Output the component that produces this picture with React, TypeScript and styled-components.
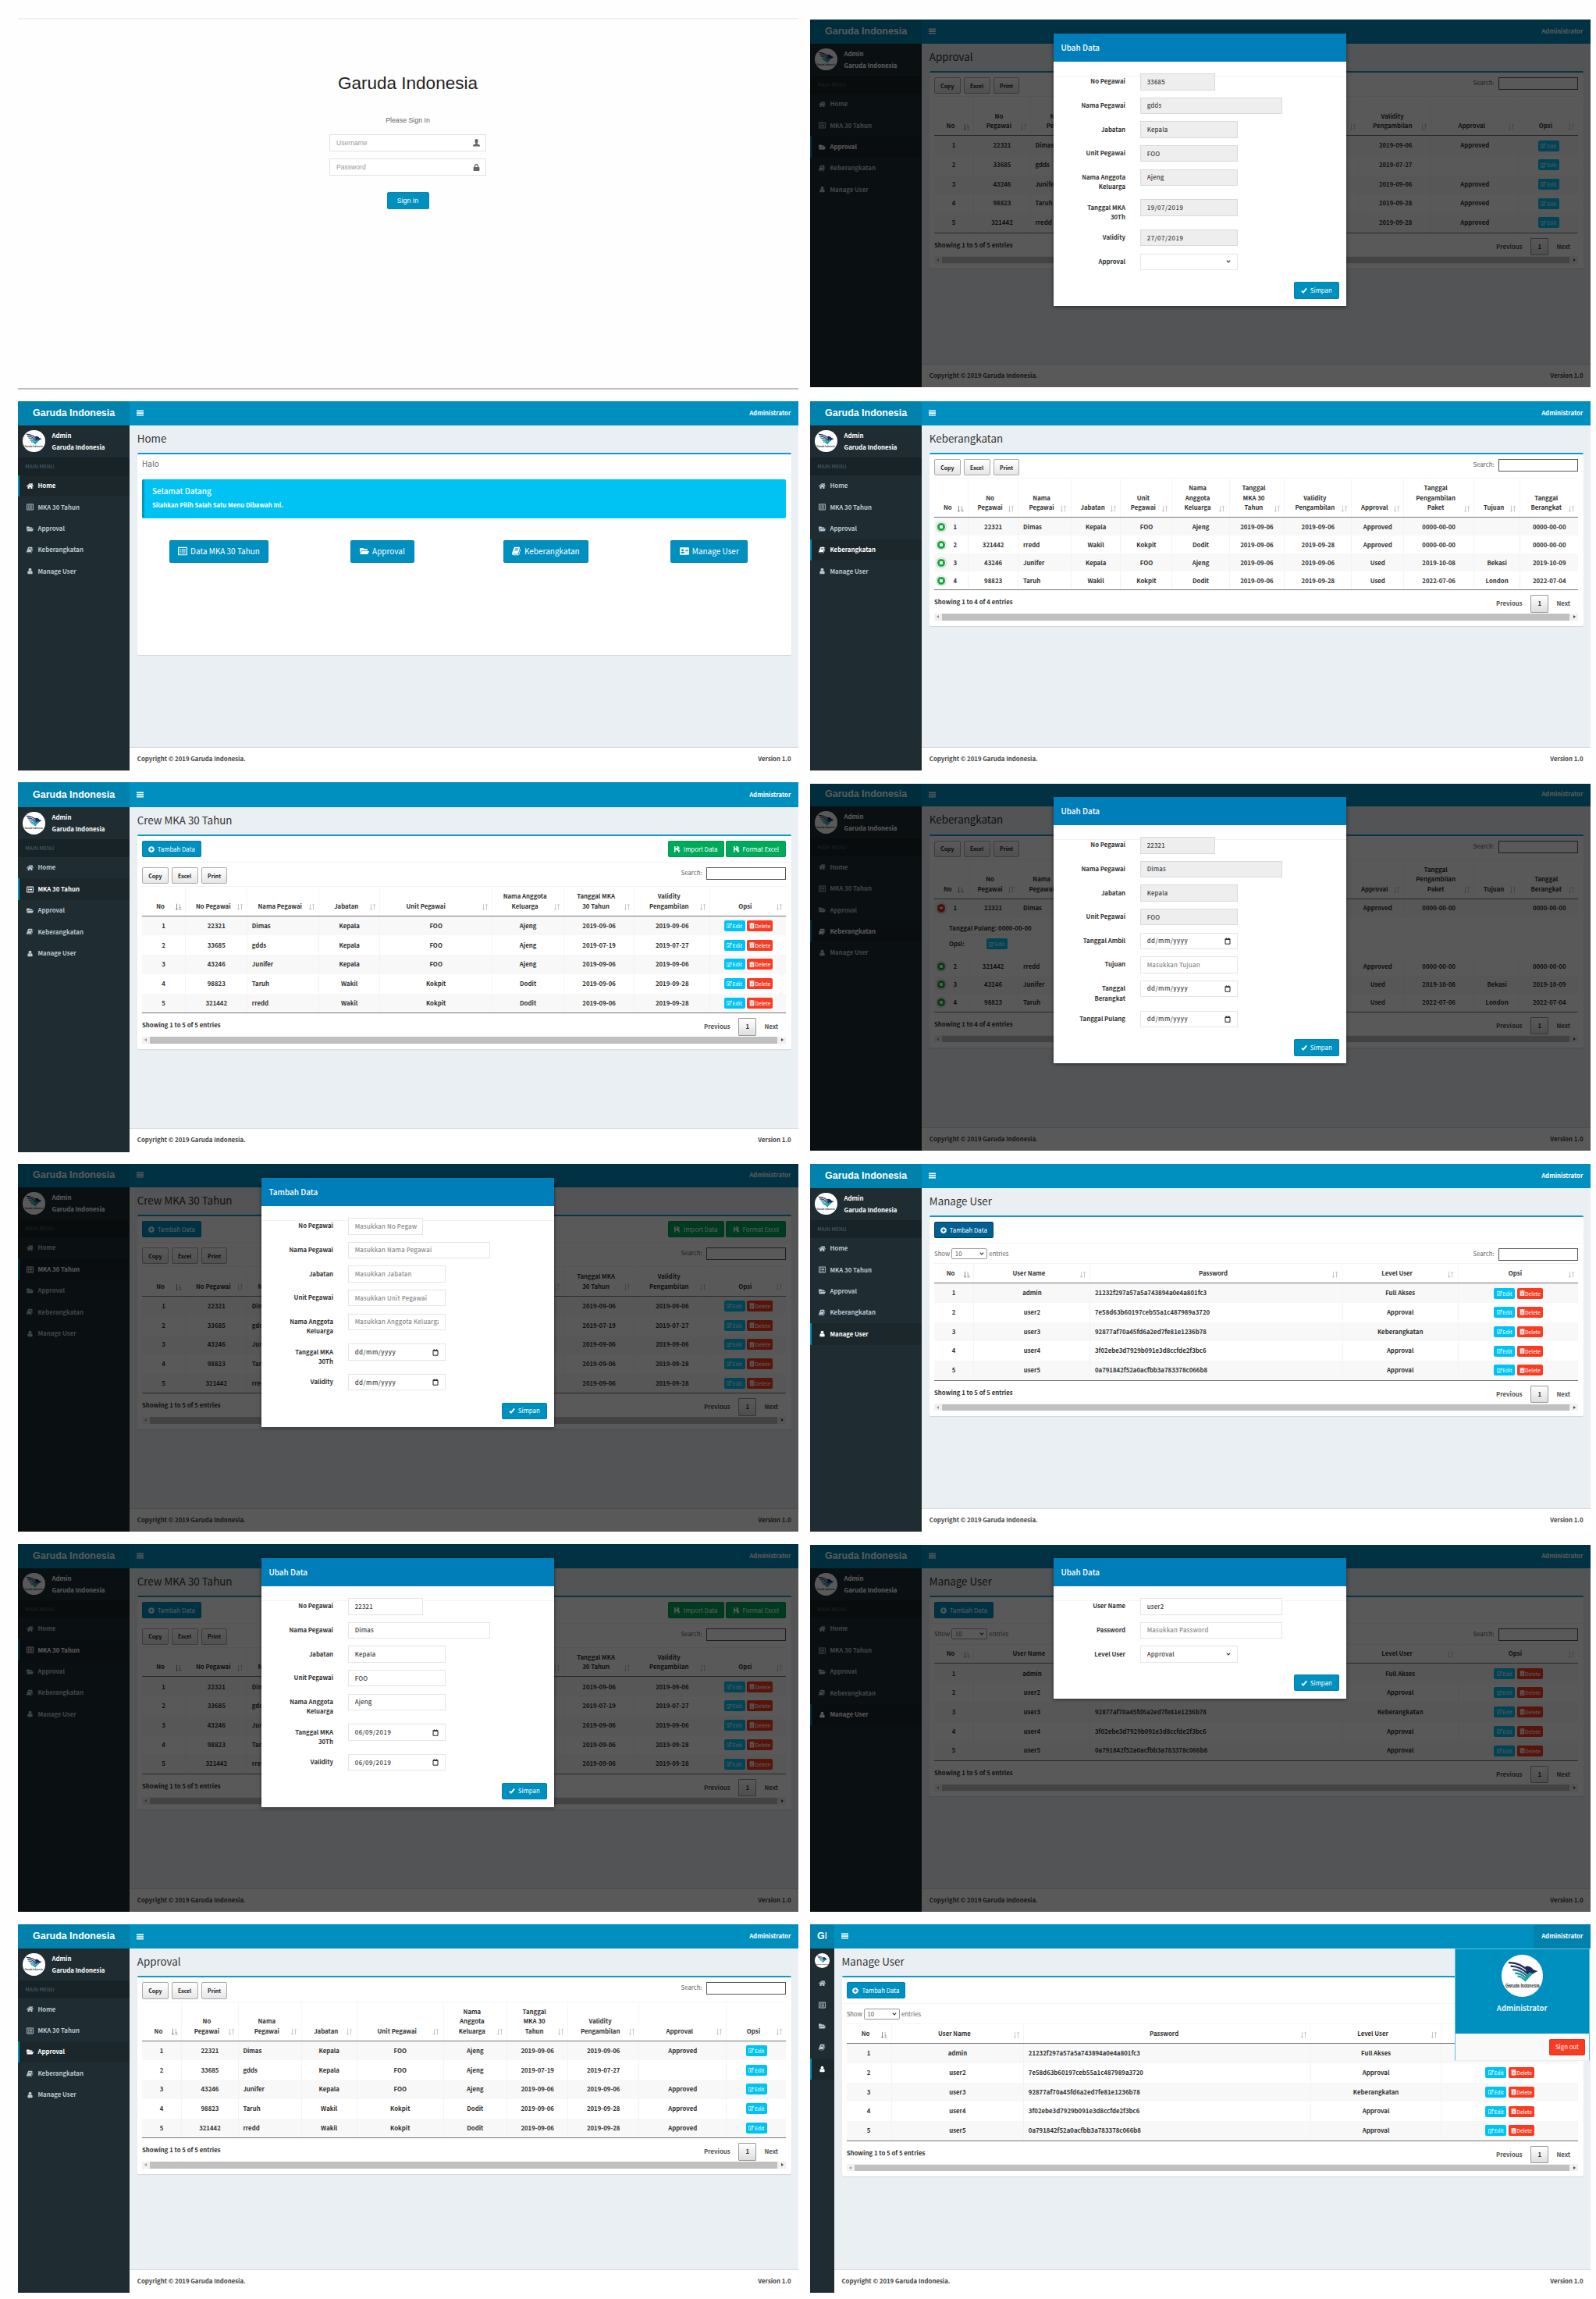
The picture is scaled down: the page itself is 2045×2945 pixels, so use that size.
import React from "react";
import styled, { createGlobalStyle, css } from "styled-components";
import {
  FaAddressCard,
  FaFolderOpen,
  FaHome,
  FaLock,
  FaPlusCircle,
  FaRegEdit,
  FaRegListAlt,
  FaTrashAlt,
} from "react-icons/fa";

const sans = `"Noto Sans CJK SC", "Noto Sans", sans-serif`;
const helvetica = `"Liberation Sans", Arial, sans-serif`;

const color = {
  primary: "#0090bf",
  primaryDark: "#0082ad",
  modal: "#007eb9",
  aqua: "#00c3f4",
  red: "#f93b22",
  green: "#00aa5c",
  sidebar: "#1f2d32",
  sidebarDark: "#182327",
  page: "#eaeff4",
};

const GlobalStyle = createGlobalStyle`
  *, *::before, *::after { box-sizing: border-box; }
  body { margin: 0; background: #fefefe; }
`;

const Board = styled.main`
  display: flex;
  gap: 15px;
  width: 2045px;
  height: 2945px;
  padding-left: 23px;
  overflow: hidden;
  font-family: ${sans};
  font-size: 7.8px;
  line-height: 12.45px;
  color: #333;
`;

const Column = styled.div`
  width: 1000px;
  display: flex;
  flex-direction: column;
`;

const Screen = styled.section<{ $gap: number; $height: number }>`
  position: relative;
  flex: none;
  margin-top: ${(p) => p.$gap}px;
  height: ${(p) => p.$height}px;
  display: flex;
  flex-direction: column;
  overflow: hidden;
  background: ${color.page};
`;

/* ---------- login ---------- */

const LoginScreen = styled.section`
  flex: none;
  margin-top: 23px;
  height: 476px;
  border-top: 2px solid #eef0f1;
  border-bottom: 2px solid #b9c0c7;
  background: #fefefe;
  display: flex;
  flex-direction: column;
  align-items: center;
  padding-right: 1px;
  font-family: ${helvetica};
  font-size: 8.8px;
  color: #666;
`;

const LoginTitle = styled.h1`
  margin: 67px 0 0;
  font-size: 22.5px;
  font-weight: 400;
  line-height: 30px;
  color: #222;
`;

const LoginHint = styled.p`
  margin: 26px 0 12px;
  line-height: 12px;
`;

const LoginField = styled.div`
  width: 201px;
  height: 22px;
  margin-bottom: 9px;
  padding: 0 7px 0 8px;
  border: 1px solid #dfe2e9;
  background: #fff;
  display: flex;
  align-items: center;
  justify-content: space-between;
  font-size: 8.6px;
  color: #999;
  svg {
    color: #666;
  }
`;

const LoginButton = styled.button`
  width: 54px;
  height: 22px;
  margin-top: 12px;
  border: 1px solid #0a86af;
  border-radius: 2px;
  background: ${color.primary};
  color: #fff;
  font: 8.8px ${helvetica};
  padding: 0;
`;

/* ---------- shell ---------- */

const Header = styled.header<{ $height: number }>`
  flex: none;
  height: ${(p) => p.$height}px;
  display: flex;
  align-items: stretch;
  background: ${color.primary};
  color: #fff;
`;

const HeaderLine = styled.div`
  flex: 1;
  display: flex;
  align-items: flex-end;
  justify-content: space-between;
`;

const Logo = styled.div<{ $mini?: boolean }>`
  width: ${(p) => (p.$mini ? 31 : 143.3)}px;
  display: flex;
  align-items: flex-end;
  justify-content: center;
  background: ${color.primaryDark};
  font: ${(p) => (p.$mini ? 400 : 700)} 12.45px/31px ${helvetica};
  b {
    font-weight: 700;
  }
`;

const Toggle = styled.div`
  height: 31px;
  padding-left: 9px;
  display: flex;
  align-items: center;
`;

const HeaderUser = styled.div<{ $open?: boolean }>`
  height: 31px;
  line-height: 30px;
  padding: 0 9.6px;
  font-weight: 700;
  ${(p) => p.$open && `background: ${color.primaryDark}; width: 72.7px; text-align: right;`}
`;

const Main = styled.div`
  flex: 1;
  display: flex;
  min-height: 0;
`;

const Sidebar = styled.aside<{ $mini?: boolean }>`
  flex: none;
  width: ${(p) => (p.$mini ? 31 : 143.3)}px;
  background: ${color.sidebar};
  color: #fff;
`;

const UserPanel = styled.div<{ $mini?: boolean }>`
  height: ${(p) => (p.$mini ? 31.3 : 41)}px;
  padding: 6.2px;
  display: flex;
  gap: 9px;
  font-weight: 700;
  line-height: 14.7px;
`;

const Avatar = styled.div<{ $size: number }>`
  flex: none;
  width: ${(p) => p.$size}px;
  height: ${(p) => p.$size}px;
  border-radius: 50%;
  background: #fff;
  overflow: hidden;
  svg {
    display: block;
    width: 100%;
    height: 100%;
  }
`;

const MenuTitle = styled.div`
  height: 23px;
  line-height: 22px;
  padding-left: 9.3px;
  background: ${color.sidebarDark};
  color: #4b646f;
  font-size: 6.8px;
`;

const MenuItem = styled.div<{ $active?: boolean }>`
  height: 27.4px;
  display: flex;
  align-items: center;
  gap: 5.4px;
  padding-left: 9px;
  border-left: 2px solid ${(p) => (p.$active ? color.primary : "transparent")};
  background: ${(p) => (p.$active ? "#1b272b" : "transparent")};
  color: ${(p) => (p.$active ? "#fff" : "#b8c7ce")};
  font-weight: 700;
  svg {
    flex: none;
    width: 9px;
    height: 9px;
  }
`;

const Page = styled.div`
  flex: 1;
  min-width: 0;
  display: flex;
  flex-direction: column;
`;

const Content = styled.div`
  flex: 1;
  padding: 0 9.5px;
`;

const PageTitle = styled.h1`
  margin: 0;
  height: 35.3px;
  line-height: 34px;
  font-size: 13.35px;
  font-weight: 400;
  color: #333;
`;

const PageFooter = styled.footer`
  flex: none;
  height: 30.3px;
  padding: 0 9.5px;
  border-top: 1px solid #d5dbe2;
  background: #fff;
  display: flex;
  justify-content: space-between;
  line-height: 28px;
  font-weight: 700;
  color: #444;
`;

const Box = styled.div`
  border-top: 2px solid #1299c4;
  border-radius: 2px;
  background: #fff;
  box-shadow: 0 1px 1px rgba(0, 0, 0, 0.1);
`;

const BoxBar = styled.div`
  height: 33.6px;
  padding: 6px 6.2px;
  border-bottom: 1px solid #f4f4f4;
  display: flex;
  gap: 2.6px;
`;

const Btn = styled.button<{ $tone?: string; $edge?: string; $w: number }>`
  width: ${(p) => p.$w}px;
  height: 21.2px;
  padding: 0;
  border: 1px solid ${(p) => p.$edge ?? "rgba(0, 60, 90, 0.15)"};
  border-radius: 2px;
  background: ${(p) => p.$tone ?? color.primary};
  color: #fff;
  font: 400 7.8px/12px ${sans};
  display: flex;
  align-items: center;
  justify-content: center;
  gap: 4px;
  white-space: nowrap;
  svg {
    flex: none;
    width: 8px;
    height: 8px;
  }
`;

const Grow = styled.div`
  flex: 1;
`;

/* ---------- data table ---------- */

const TableArea = styled.div`
  padding: 6px 6.2px 6.6px;
`;

const Controls = styled.div<{ $height: number }>`
  height: ${(p) => p.$height}px;
  display: flex;
  gap: 4.2px;
  align-items: flex-start;
`;

const ExportButton = styled.button`
  width: 33.7px;
  height: 21.4px;
  padding: 0;
  border: 1px solid #aaa;
  border-radius: 2px;
  background: linear-gradient(#fff, #e6e6e6);
  color: #222;
  font: 700 6.9px/12px ${sans};
`;

const Muted = styled.span`
  color: #666;
  line-height: 14.4px;
  display: flex;
  align-items: center;
`;

const SearchInput = styled.span`
  width: 102.5px;
  height: 16px;
  border: 1px solid #555;
  background: #fff;
  margin-left: 1px;
`;

const LengthSelect = styled.span`
  width: 46px;
  height: 14px;
  margin: 0 2px;
  padding: 0 3.5px;
  border: 1px solid #999;
  border-radius: 2px;
  display: inline-flex;
  align-items: center;
  justify-content: space-between;
  color: #555;
`;

const Grid = styled.div`
  border-bottom: 1px solid #777;
  font-weight: 700;
`;

const rowCss = css<{ $cols: string; $h: number }>`
  display: grid;
  grid-template-columns: ${(p) => p.$cols};
  height: ${(p) => p.$h}px;
`;

const HeadRow = styled.div<{ $cols: string; $h: number }>`
  ${rowCss}
  border-top: 1px solid #f4f4f4;
  border-bottom: 1px solid #777;
`;

const HeadCell = styled.div<{ $shift?: number }>`
  position: relative;
  display: flex;
  align-items: flex-end;
  justify-content: center;
  padding: 0 ${(p) => p.$shift ?? 8}px 5.6px 0;
  border-left: 1px solid #f6f6f6;
  text-align: center;
  white-space: pre;
  &:first-child {
    border-left: 0;
  }
`;

const SortMark = styled.svg`
  position: absolute;
  right: 4.4px;
  bottom: 6px;
  width: 9px;
  height: 9.5px;
  fill: none;
`;

const Row = styled.div<{ $cols: string; $h: number; $odd: boolean }>`
  ${rowCss}
  background: ${(p) => (p.$odd ? "#f8f8f8" : "#fff")};
`;

const Cell = styled.div<{ $left?: boolean; $indent?: boolean }>`
  display: flex;
  align-items: center;
  gap: 2.6px;
  justify-content: ${(p) => (p.$left ? "flex-start" : "center")};
  padding-left: ${(p) => (p.$left ? 5.5 : 0)}px;
  border-left: 1px solid #f3f3f3;
  white-space: nowrap;
  &:first-child {
    border-left: 0;
  }
  ${(p) =>
    p.$indent &&
    css`
      justify-content: flex-start;
      gap: 9px;
      padding-left: 3px;
    `}
`;

const Dot = styled.span<{ $minus?: boolean }>`
  width: 12.4px;
  height: 12.4px;
  border-radius: 50%;
  border: 1.2px solid #fff;
  box-shadow: 0 0 2px #888;
  background: ${(p) => (p.$minus ? "#d33333" : "#10a838")};
  display: flex;
  align-items: center;
  justify-content: center;
  &::after {
    content: "";
    width: 4px;
    height: ${(p) => (p.$minus ? 2 : 4)}px;
    background: #fff;
    border-radius: 1px;
  }
`;

const SmallBtn = styled.span<{ $danger?: boolean }>`
  width: ${(p) => (p.$danger ? 33 : 27)}px;
  height: 14px;
  border-radius: 2px;
  background: ${(p) => (p.$danger ? color.red : color.aqua)};
  color: #fff;
  font: 400 6.7px/12px ${sans};
  display: flex;
  align-items: center;
  justify-content: center;
  gap: 0.5px;
  svg {
    width: 7px;
    height: 7.4px;
  }
`;

const Detail = styled.div`
  height: 51.8px;
  padding: 5.5px 0 0 19px;
`;

const DetailLine = styled.div<{ $line?: boolean }>`
  width: 109px;
  height: ${(p) => (p.$line ? 18 : 22)}px;
  display: flex;
  align-items: center;
  gap: 28px;
  border-bottom: ${(p) => (p.$line ? "1px solid #efefef" : "0")};
`;

const TableFooter = styled.div`
  height: 29.6px;
  padding-top: 6px;
  display: flex;
  font-weight: 700;
  color: #333;
  line-height: 17.5px;
`;

const PageLink = styled.span<{ $w: number }>`
  width: ${(p) => p.$w}px;
  line-height: 21px;
  text-align: center;
  color: #555;
`;

const CurrentPage = styled.span`
  width: 23px;
  height: 22.4px;
  line-height: 20px;
  text-align: center;
  border: 1px solid #999;
  border-radius: 1px;
  background: linear-gradient(#fff, #dedede);
`;

const ScrollTrack = styled.div`
  height: 9.2px;
  background: #f1f1f1;
  padding: 0 3px;
  display: flex;
  align-items: center;
  justify-content: space-between;
`;

const ScrollThumb = styled.div`
  flex: 1;
  height: 8.4px;
  margin: 0 5px 0 4.5px;
  background: #c0c0c0;
`;

const Arrow = styled.i<{ $right?: boolean }>`
  width: 0;
  height: 0;
  border: 2px solid transparent;
  ${(p) => (p.$right ? "border-left: 3px solid #444; border-right: 0;" : "border-right: 3px solid #999; border-left: 0;")}
`;

/* ---------- home ---------- */

const BoxHeading = styled.div`
  height: 25.6px;
  line-height: 24px;
  padding-left: 6.2px;
  border-bottom: 1px solid #f4f4f4;
  font-size: 10px;
  color: #666;
`;

const Callout = styled.div`
  margin: 6.2px 6.2px 0;
  height: 50px;
  padding: 7px 0 0 10px;
  border-left: 3px solid #0098bf;
  border-radius: 2px;
  background: ${color.aqua};
  color: #fff;
  font-weight: 700;
  h4 {
    margin: 0 0 5px;
    font-size: 10px;
    font-weight: 500;
    line-height: 15px;
  }
`;

const Shortcuts = styled.div`
  height: 175.3px;
  padding-top: 28px;
  display: grid;
  grid-template-columns: repeat(4, 1fr);
  justify-items: center;
`;

const BigBtn = styled(Btn)`
  height: 29px;
  font-size: 10px;
  svg {
    width: 12px;
    height: 12px;
  }
`;

/* ---------- overlays ---------- */

const Backdrop = styled.div`
  position: absolute;
  inset: 0;
  background: rgba(0, 0, 0, 0.65);
`;

const Dialog = styled.div<{ $top: number }>`
  position: absolute;
  left: 312px;
  top: ${(p) => p.$top}px;
  width: 375.4px;
  background: #fff;
  box-shadow: 0 1px 5px rgba(0, 0, 0, 0.5);
`;

const DialogHead = styled.div`
  height: 35.7px;
  line-height: 35px;
  padding-left: 9.4px;
  background: ${color.modal};
  color: #fff;
  font-size: 10px;
  font-weight: 500;
`;

const DialogRule = styled.div`
  height: 19px;
  border-bottom: 1px solid #f2f2f2;
`;

const Form = styled.div`
  margin-top: -3.4px;
`;

const FormRow = styled.div<{ $tall?: boolean }>`
  height: ${(p) => (p.$tall ? 38.7 : 30.6)}px;
  display: flex;
  align-items: flex-start;
  gap: 19.3px;
`;

const Label = styled.div`
  width: 92px;
  padding-top: 4.2px;
  text-align: right;
  white-space: pre;
  font-weight: 700;
`;

const Field = styled.div<{ $w: number; $disabled?: boolean; $hint?: boolean; $date?: boolean }>`
  width: ${(p) => p.$w}px;
  height: 21.4px;
  padding: 0 7.4px;
  border: 1px solid ${(p) => (p.$disabled ? "#d6dade" : "#e3e5ea")};
  background: ${(p) => (p.$disabled ? "#eee" : "#fff")};
  color: ${(p) => (p.$hint ? "#8c8c8c" : "#444")};
  font-weight: 500;
  letter-spacing: ${(p) => (p.$date ? 0.5 : 0.2)}px;
  display: flex;
  align-items: center;
  justify-content: space-between;
  white-space: nowrap;
  span {
    overflow: hidden;
  }
`;

const DialogFoot = styled.div`
  padding: 6.2px 9.6px 9.7px;
  display: flex;
  justify-content: flex-end;
`;

const UserMenu = styled.div<{ $top: number }>`
  position: absolute;
  right: 1px;
  top: ${(p) => p.$top}px;
  width: 173.5px;
  border: 1px solid #5fc0de;
  border-bottom-color: #eee;
  background: #f9f9f9;
`;

const UserMenuHead = styled.div`
  height: 108.6px;
  padding-top: 7.6px;
  display: flex;
  flex-direction: column;
  align-items: center;
  gap: 6px;
  background: ${color.primary};
  color: #e0f3f9;
  font-size: 9.5px;
  font-weight: 700;
  line-height: 17px;
`;

const UserMenuFoot = styled.div`
  padding: 6.4px 5px;
  display: flex;
  justify-content: flex-end;
`;

/* ---------- drawings ---------- */

const GarudaMark = () => (
  <svg viewBox="0 0 60 60">
    <g fill="none" strokeWidth="2.5">
      <path d="M10 11.500 Q27 11 40 25" stroke="#1e2a5a" />
      <path d="M13 16.500 Q27 16.500 38.500 28" stroke="#22305f" />
      <path d="M16 21.500 Q27 21.500 37 31" stroke="#1f6b8a" />
      <path d="M19.500 26.500 Q28 26.500 35.500 34" stroke="#12939c" />
      <path d="M23 31 Q29 31 34 37" stroke="#12a6a4" />
    </g>
    <path d="M34 17 Q38 15 43 18.500 L46 21.500 L52 23.500 L46 26.500 L39 32 L36 26 Z" fill="#1e2a5a" />
    <path d="M40 25 L45 27 L34 39 L32 36 Z" fill="#16a5a5" />
    <text x="30" y="47" fontSize="7.6" textAnchor="middle" fill="#333" fontFamily="Liberation Sans, Arial, sans-serif" textLength="49" lengthAdjust="spacingAndGlyphs">
      Garuda Indonesia
    </text>
  </svg>
);

const Bars = () => (
  <svg width="9" height="8" viewBox="0 0 9 8" fill="#fff">
    <path d="M0 .5h9v1.700H0zM0 3.200h9v1.700H0zM0 5.900h9v1.700H0z" />
  </svg>
);

const Book = () => (
  <svg viewBox="0 0 1792 1792" fill="currentColor">
    <path d="M1639 478q40 57 18 129l-275 906q-19 64-76.500 107.500t-122.500 43.500h-923q-77 0-148.500-53.500t-99.500-131.500q-24-67-2-127 0-4 3-27t4-37q1-8-3-21.500t-3-19.500q2-11 8-21t16.500-23.500 16.500-23.500q23-38 45-91.500t30-91.500q3-10 .5-30t-.5-28q3-11 17-28t17-23q21-36 42-92t25-90q1-9-2.500-32t.5-28q4-13 22-30.500t22-22.500q19-26 42.500-84.500t27.500-96.500q1-8-3-25.500t-2-26.500q2-8 9-18t18-23 17-21q8-12 16.500-30.500t15-35 16-36 19.500-32 26.500-23.500 36-11.500 47.500 5.500l-1 3q38-9 51-9h761q74 0 114 56t18 130l-274 906q-36 119-71.500 153.500t-128.500 34.500h-869q-27 0-38 15-11 16-1 43 24 70 144 70h923q29 0 56-15.500t35-41.500l300-987q7-22 5-57 38 15 59 43zm-1064 2q-4 13 2 22.500t20 9.500h608q13 0 25.500-9.500t16.500-22.500l21-64q4-13-2-22.500t-20-9.500h-608q-13 0-25.500 9.500t-16.500 22.500zm-83 256q-4 13 2 22.500t20 9.500h608q13 0 25.500-9.500t16.500-22.500l21-64q4-13-2-22.500t-20-9.500h-608q-13 0-25.500 9.500t-16.500 22.500z" />
  </svg>
);

const Person = () => (
  <svg viewBox="0 0 1792 1792" fill="currentColor">
    <path d="M1536 1399q0 109-62.500 187t-150.500 78h-854q-88 0-150.500-78t-62.500-187q0-85 8.500-160.500t31.500-152 58.500-131 94-89 134.500-34.500q131 128 313 128t313-128q76 0 134.500 34.500t94 89 58.500 131 31.500 152 8.500 160.500zm-256-887q0 159-112.500 271.500t-271.500 112.500-271.500-112.500-112.500-271.500 112.500-271.500 271.500-112.500 271.500 112.500 112.500 271.500z" />
  </svg>
);

const Bust = () => (
  <svg width="9" height="10" viewBox="0 0 9 10" fill="currentColor">
    <path d="M4.500 0C6 0 6.700 1.100 6.600 2.700 6.500 4 6.100 4.800 5.600 5.400v.9L8.300 7.600q.7.400.7 1.100V9.500H0V8.700q0-.7.7-1.100L3.400 6.300v-.9C2.900 4.800 2.500 4 2.400 2.700 2.300 1.100 3 0 4.500 0z" />
  </svg>
);

const Tick = () => (
  <svg viewBox="0 0 9 9">
    <path d="M1 5.200 3.300 7.400 8 1.500" fill="none" stroke="#fff" strokeWidth="2" />
  </svg>
);

const Chevron = () => (
  <svg width="6" height="4" viewBox="0 0 6 4">
    <path d="M.8 .7 3 3 5.200 .7" fill="none" stroke="#333" strokeWidth="1.100" />
  </svg>
);

const Calendar = () => (
  <svg width="8" height="9" viewBox="0 0 8 9">
    <path d="M1 1.800h6v6.400H1zM1 2.400h6M2.400 .4v1.400M5.600 .4v1.400" fill="none" stroke="#222" strokeWidth="1" />
  </svg>
);

const FloppyArrow = ({ up }: { up?: boolean }) => (
  <svg viewBox="0 0 16 16" fill="#fff">
    <path d="M1 0h2v5h6V0h1l3 3v4h-3v4H6V9H3v6H1a1 1 0 0 1-1-1V1a1 1 0 0 1 1-1zM6.500 0h2v3.500h-2z" />
    {up ? <path d="M11.500 8 15.500 12H13v3.500h-3V12H7.500z" /> : <path d="M10 8h3v3.500h2.500L11.500 15.800 7.500 11.500H10z" />}
  </svg>
);

const Sort = ({ asc }: { asc?: boolean }) => (
  <SortMark viewBox="0 0 9 9" stroke={asc ? "#888" : "#c6c6c6"} strokeWidth="0.95">
    <path d="M2.500 .500v7.600M1 6.600l1.500 1.600L4 6.600" />
    {asc ? <path d="M5.500 1.500h1M5.500 3.500h1.600M5.500 5.500h2.300M5.500 7.600h3" /> : <path d="M6.500 8.300V.800M5 2.300 6.500.700 8 2.300" />}
  </SortMark>
);

const menu = [
  { name: "Home", icon: <FaHome /> },
  { name: "MKA 30 Tahun", icon: <FaRegListAlt /> },
  { name: "Approval", icon: <FaFolderOpen /> },
  { name: "Keberangkatan", icon: <Book /> },
  { name: "Manage User", icon: <Person /> },
];

type ShellProps = {
  gap: number;
  height: number;
  head: number;
  active: string;
  title: string;
  mini?: boolean;
  overlay?: React.ReactNode;
  children: React.ReactNode;
};

const Shell = ({ gap, height, head, active, title, mini, overlay, children }: ShellProps) => (
  <Screen $gap={gap} $height={height}>
    <Header $height={head}>
      <Logo $mini={mini}>{mini ? <><b>G</b>I</> : "Garuda Indonesia"}</Logo>
      <HeaderLine>
        <Toggle><Bars /></Toggle>
        <HeaderUser $open={mini}>Administrator</HeaderUser>
      </HeaderLine>
    </Header>
    <Main>
      <Sidebar $mini={mini}>
        <UserPanel $mini={mini}>
          <Avatar $size={mini ? 18.7 : 28.4}><GarudaMark /></Avatar>
          {!mini && <div>Admin<br />Garuda Indonesia</div>}
        </UserPanel>
        {!mini && <MenuTitle>MAIN MENU</MenuTitle>}
        {menu.map((m) => (
          <MenuItem key={m.name} $active={m.name === active}>
            {m.icon}
            {!mini && m.name}
          </MenuItem>
        ))}
      </Sidebar>
      <Page>
        <Content>
          <PageTitle>{title}</PageTitle>
          <Box>{children}</Box>
        </Content>
        <PageFooter>
          <span>Copyright © 2019 Garuda Indonesia.</span>
          <span>Version 1.0</span>
        </PageFooter>
      </Page>
    </Main>
    {overlay}
  </Screen>
);

type Col = { label: string; w: number; left?: boolean; shift?: number };

type TableProps = {
  cols: Col[];
  rows: React.ReactNode[][];
  headHeight: number;
  rowHeight: number;
  exports?: boolean;
  expandable?: boolean;
  openRow?: boolean;
  count: number;
};

const DataTable = ({ cols, rows, headHeight, rowHeight, exports, expandable, openRow, count }: TableProps) => {
  const template = cols.map((c) => `${c.w}fr`).join(" ");
  return (
    <TableArea>
      <Controls $height={exports ? 24.3 : 19.8}>
        {exports ? (
          ["Copy", "Excel", "Print"].map((b) => <ExportButton key={b}>{b}</ExportButton>)
        ) : (
          <Muted>Show<LengthSelect>10<Chevron /></LengthSelect>entries</Muted>
        )}
        <Grow />
        <Muted>Search:</Muted>
        <SearchInput />
      </Controls>
      <Grid>
        <HeadRow $cols={template} $h={headHeight}>
          {cols.map((c, i) => (
            <HeadCell key={c.label} $shift={c.shift}>
              {c.label}
              <Sort asc={i === 0} />
            </HeadCell>
          ))}
        </HeadRow>
        {rows.map((r, i) => (
          <React.Fragment key={i}>
            <Row $cols={template} $h={rowHeight} $odd={i % 2 === 0}>
              {r.map((v, j) => (
                <Cell key={j} $left={cols[j].left} $indent={expandable && j === 0}>
                  {expandable && j === 0 && <Dot $minus={openRow && i === 0} />}
                  {v}
                </Cell>
              ))}
            </Row>
            {openRow && i === 0 && (
              <Detail>
                <DetailLine $line>Tanggal Pulang: 0000-00-00</DetailLine>
                <DetailLine>Opsi:<EditButton /></DetailLine>
              </Detail>
            )}
          </React.Fragment>
        ))}
      </Grid>
      <TableFooter>
        <span>Showing 1 to {count} of {count} entries</span>
        <Grow />
        <PageLink $w={55}>Previous</PageLink>
        <CurrentPage>1</CurrentPage>
        <PageLink $w={38}>Next</PageLink>
      </TableFooter>
      <ScrollTrack>
        <Arrow />
        <ScrollThumb />
        <Arrow $right />
      </ScrollTrack>
    </TableArea>
  );
};

const EditButton = () => <SmallBtn><FaRegEdit />Edit</SmallBtn>;
const DeleteButton = () => <SmallBtn $danger><FaTrashAlt />Delete</SmallBtn>;

const crew = [
  ["22321", "Dimas", "Kepala", "FOO", "Ajeng", "2019-09-06", "2019-09-06", "Approved"],
  ["33685", "gdds", "Kepala", "FOO", "Ajeng", "2019-07-19", "2019-07-27", ""],
  ["43246", "Junifer", "Kepala", "FOO", "Ajeng", "2019-09-06", "2019-09-06", "Approved"],
  ["98823", "Taruh", "Wakil", "Kokpit", "Dodit", "2019-09-06", "2019-09-28", "Approved"],
  ["321442", "rredd", "Wakil", "Kokpit", "Dodit", "2019-09-06", "2019-09-28", "Approved"],
];

const AddButton = ({ pressed }: { pressed?: boolean }) => (
  <Btn $w={75.6} $tone={pressed ? "#006092" : undefined} $edge={pressed ? "#0a3f61" : undefined}>
    <FaPlusCircle />Tambah Data
  </Btn>
);

const CrewTable = () => (
  <>
    <BoxBar>
      <AddButton />
      <Grow />
      <Btn $w={72.2} $tone={color.green}><FloppyArrow up />Import Data</Btn>
      <Btn $w={77} $tone={color.green}><FloppyArrow />Format Excel</Btn>
    </BoxBar>
    <DataTable
      exports
      count={5}
      headHeight={38.6}
      rowHeight={24.7}
      cols={[
        { label: "No", w: 55.3 },
        { label: "No Pegawai", w: 79 },
        { label: "Nama Pegawai", w: 92, left: true },
        { label: "Jabatan", w: 78 },
        { label: "Unit Pegawai", w: 144, shift: 26 },
        { label: "Nama Anggota\nKeluarga", w: 92 },
        { label: "Tanggal MKA\n30 Tahun", w: 90 },
        { label: "Validity\nPengambilan", w: 97.3 },
        { label: "Opsi", w: 98 },
      ]}
      rows={crew.map((c, i) => [i + 1, ...c.slice(0, 7), <><EditButton /><DeleteButton /></>])}
    />
  </>
);

const ApprovalTable = () => (
  <DataTable
    exports
    count={5}
    headHeight={51}
    rowHeight={24.7}
    cols={[
      { label: "No", w: 50 },
      { label: "No\nPegawai", w: 72.9 },
      { label: "Nama\nPegawai", w: 80.8, left: true },
      { label: "Jabatan", w: 70.9 },
      { label: "Unit Pegawai", w: 111 },
      { label: "Nama\nAnggota\nKeluarga", w: 81.3 },
      { label: "Tanggal\nMKA 30\nTahun", w: 78.3 },
      { label: "Validity\nPengambilan", w: 90.7 },
      { label: "Approval", w: 112.4 },
      { label: "Opsi", w: 76.8 },
    ]}
    rows={crew.map((c, i) => [i + 1, ...c, <EditButton />])}
  />
);

const departures = [
  [1, "22321", "Dimas", "Kepala", "FOO", "Ajeng", "2019-09-06", "2019-09-06", "Approved", "0000-00-00", "", "0000-00-00"],
  [2, "321442", "rredd", "Wakil", "Kokpit", "Dodit", "2019-09-06", "2019-09-28", "Approved", "0000-00-00", "", "0000-00-00"],
  [3, "43246", "Junifer", "Kepala", "FOO", "Ajeng", "2019-09-06", "2019-09-06", "Used", "2019-10-08", "Bekasi", "2019-10-09"],
  [4, "98823", "Taruh", "Wakil", "Kokpit", "Dodit", "2019-09-06", "2019-09-28", "Used", "2022-07-06", "London", "2022-07-04"],
];

const DepartureTable = ({ open }: { open?: boolean }) => (
  <DataTable
    exports
    expandable
    openRow={open}
    count={4}
    headHeight={51}
    rowHeight={23}
    cols={[
      { label: "No", w: 42.7 },
      { label: "No\nPegawai", w: 64.7 },
      { label: "Nama\nPegawai", w: 67.3, left: true },
      { label: "Jabatan", w: 63.5 },
      { label: "Unit\nPegawai", w: 66 },
      { label: "Nama\nAnggota\nKeluarga", w: 73.1 },
      { label: "Tanggal\nMKA 30\nTahun", w: 70.6 },
      { label: "Validity\nPengambilan", w: 86.1 },
      { label: "Approval", w: 66.6 },
      { label: "Tanggal\nPengambilan\nPaket", w: 90 },
      { label: "Tujuan", w: 58.9 },
      { label: "Tanggal\nBerangkat", w: 75.1 },
    ]}
    rows={departures}
  />
);

const users = [
  ["admin", "21232f297a57a5a743894a0e4a801fc3", "Full Akses"],
  ["user2", "7e58d63b60197ceb55a1c487989a3720", "Approval"],
  ["user3", "92877af70a45fd6a2ed7fe81e1236b78", "Keberangkatan"],
  ["user4", "3f02ebe3d7929b091e3d8ccfde2f3bc6", "Approval"],
  ["user5", "0a791842f52a0acfbb3a783378c066b8", "Approval"],
];

const UserTable = ({ pressed, widths }: { pressed?: boolean; widths: number[] }) => (
  <>
    <BoxBar><AddButton pressed={pressed} /></BoxBar>
    <DataTable
      count={5}
      headHeight={25.8}
      rowHeight={24.7}
      cols={[
        { label: "No", w: widths[0] },
        { label: "User Name", w: widths[1] },
        { label: "Password", w: widths[2], left: true },
        { label: "Level User", w: widths[3] },
        { label: "Opsi", w: widths[4] },
      ]}
      rows={users.map((u, i) => [i + 1, ...u, <><EditButton /><DeleteButton /></>])}
    />
  </>
);

const wideUsers = [50.3, 149, 323, 147.7, 154.6];
const miniUsers = [56.9, 169.6, 367.6, 167, 176.1];

type FieldSpec = { label: string; value?: string; w?: number; kind?: "off" | "hint" | "date" | "select" };

const FormDialog = ({ top, title, fields }: { top: number; title: string; fields: FieldSpec[] }) => (
  <>
    <Backdrop />
    <Dialog $top={top}>
      <DialogHead>{title}</DialogHead>
      <DialogRule />
      <Form>
        {fields.map((f) => (
          <FormRow key={f.label} $tall={f.label.includes("\n")}>
            <Label>{f.label}</Label>
            <Field
              $w={f.w ?? 124.4}
              $disabled={f.kind === "off"}
              $hint={f.kind === "hint"}
              $date={f.value?.includes("/")}
            >
              <span>{f.value}</span>
              {f.kind === "date" && <Calendar />}
              {f.kind === "select" && <Chevron />}
            </Field>
          </FormRow>
        ))}
      </Form>
      <DialogFoot><Btn $w={58}><Tick />Simpan</Btn></DialogFoot>
    </Dialog>
  </>
);

const shortcuts = [
  { label: "Data MKA 30 Tahun", w: 127, icon: <FaRegListAlt /> },
  { label: "Approval", w: 82, icon: <FaFolderOpen /> },
  { label: "Keberangkatan", w: 108.5, icon: <Book /> },
  { label: "Manage User", w: 99, icon: <FaAddressCard /> },
];

export default function App() {
  return (
    <>
      <GlobalStyle />
      <Board>
        <Column>
          <LoginScreen>
            <LoginTitle>Garuda Indonesia</LoginTitle>
            <LoginHint>Please Sign In</LoginHint>
            <LoginField>Username<Bust /></LoginField>
            <LoginField>Password<FaLock size={9} /></LoginField>
            <LoginButton>Sign In</LoginButton>
          </LoginScreen>

          <Shell gap={15} height={473} head={30.7} active="Home" title="Home">
            <BoxHeading>Halo</BoxHeading>
            <Callout>
              <h4>Selamat Datang</h4>
              Silahkan Pilih Salah Satu Menu Dibawah Ini.
            </Callout>
            <Shortcuts>
              {shortcuts.map((s) => (
                <BigBtn key={s.label} $w={s.w}>{s.icon}{s.label}</BigBtn>
              ))}
            </Shortcuts>
          </Shell>

          <Shell gap={15.4} height={473.3} head={31.6} active="MKA 30 Tahun" title="Crew MKA 30 Tahun">
            <CrewTable />
          </Shell>

          <Shell
            gap={15.3}
            height={471}
            head={30}
            active="MKA 30 Tahun"
            title="Crew MKA 30 Tahun"
            overlay={
              <FormDialog
                top={18}
                title="Tambah Data"
                fields={[
                  { label: "No Pegawai", value: "Masukkan No Pegawai", w: 96, kind: "hint" },
                  { label: "Nama Pegawai", value: "Masukkan Nama Pegawai", w: 181.3, kind: "hint" },
                  { label: "Jabatan", value: "Masukkan Jabatan", kind: "hint" },
                  { label: "Unit Pegawai", value: "Masukkan Unit Pegawai", kind: "hint" },
                  { label: "Nama Anggota\nKeluarga", value: "Masukkan Anggota Keluarga", kind: "hint" },
                  { label: "Tanggal MKA\n30Th", value: "dd/mm/yyyy", kind: "date" },
                  { label: "Validity", value: "dd/mm/yyyy", kind: "date" },
                ]}
              />
            }
          >
            <CrewTable />
          </Shell>

          <Shell
            gap={16}
            height={471}
            head={30.7}
            active="MKA 30 Tahun"
            title="Crew MKA 30 Tahun"
            overlay={
              <FormDialog
                top={18}
                title="Ubah Data"
                fields={[
                  { label: "No Pegawai", value: "22321", w: 96 },
                  { label: "Nama Pegawai", value: "Dimas", w: 181.3 },
                  { label: "Jabatan", value: "Kepala" },
                  { label: "Unit Pegawai", value: "FOO" },
                  { label: "Nama Anggota\nKeluarga", value: "Ajeng" },
                  { label: "Tanggal MKA\n30Th", value: "06/09/2019", kind: "date" },
                  { label: "Validity", value: "06/09/2019", kind: "date" },
                ]}
              />
            }
          >
            <CrewTable />
          </Shell>

          <Shell gap={16} height={472} head={31.2} active="Approval" title="Approval">
            <ApprovalTable />
          </Shell>
        </Column>

        <Column>
          <Shell
            gap={25}
            height={471}
            head={30.7}
            active="Approval"
            title="Approval"
            overlay={
              <FormDialog
                top={18}
                title="Ubah Data"
                fields={[
                  { label: "No Pegawai", value: "33685", w: 96, kind: "off" },
                  { label: "Nama Pegawai", value: "gdds", w: 181.3, kind: "off" },
                  { label: "Jabatan", value: "Kepala", kind: "off" },
                  { label: "Unit Pegawai", value: "FOO", kind: "off" },
                  { label: "Nama Anggota\nKeluarga", value: "Ajeng", kind: "off" },
                  { label: "Tanggal MKA\n30Th", value: "19/07/2019", kind: "off" },
                  { label: "Validity", value: "27/07/2019", kind: "off" },
                  { label: "Approval", value: "", kind: "select" },
                ]}
              />
            }
          >
            <ApprovalTable />
          </Shell>

          <Shell gap={18} height={473} head={30.7} active="Keberangkatan" title="Keberangkatan">
            <DepartureTable />
          </Shell>

          <Shell
            gap={17}
            height={470.3}
            head={29.3}
            active="Keberangkatan"
            title="Keberangkatan"
            overlay={
              <FormDialog
                top={17}
                title="Ubah Data"
                fields={[
                  { label: "No Pegawai", value: "22321", w: 96, kind: "off" },
                  { label: "Nama Pegawai", value: "Dimas", w: 181.3, kind: "off" },
                  { label: "Jabatan", value: "Kepala", kind: "off" },
                  { label: "Unit Pegawai", value: "FOO", kind: "off" },
                  { label: "Tanggal Ambil", value: "dd/mm/yyyy", kind: "date" },
                  { label: "Tujuan", value: "Masukkan Tujuan", kind: "hint" },
                  { label: "Tanggal\nBerangkat", value: "dd/mm/yyyy", kind: "date" },
                  { label: "Tanggal Pulang", value: "dd/mm/yyyy", kind: "date" },
                ]}
              />
            }
          >
            <DepartureTable open />
          </Shell>

          <Shell gap={16.7} height={471.3} head={30.7} active="Manage User" title="Manage User">
            <UserTable pressed widths={wideUsers} />
          </Shell>

          <Shell
            gap={16.7}
            height={470}
            head={30}
            active="Manage User"
            title="Manage User"
            overlay={
              <FormDialog
                top={17}
                title="Ubah Data"
                fields={[
                  { label: "User Name", value: "user2", w: 181.3 },
                  { label: "Password", value: "Masukkan Password", w: 181.3, kind: "hint" },
                  { label: "Level User", value: "Approval", kind: "select" },
                ]}
              />
            }
          >
            <UserTable widths={wideUsers} />
          </Shell>

          <Shell
            gap={16}
            height={472}
            head={30.7}
            active="Manage User"
            title="Manage User"
            mini
            overlay={
              <UserMenu $top={30.7}>
                <UserMenuHead>
                  <Avatar $size={53.5}><GarudaMark /></Avatar>
                  Administrator
                </UserMenuHead>
                <UserMenuFoot><Btn $w={46} $tone={color.red}>Sign out</Btn></UserMenuFoot>
              </UserMenu>
            }
          >
            <UserTable widths={miniUsers} />
          </Shell>
        </Column>
      </Board>
    </>
  );
}
